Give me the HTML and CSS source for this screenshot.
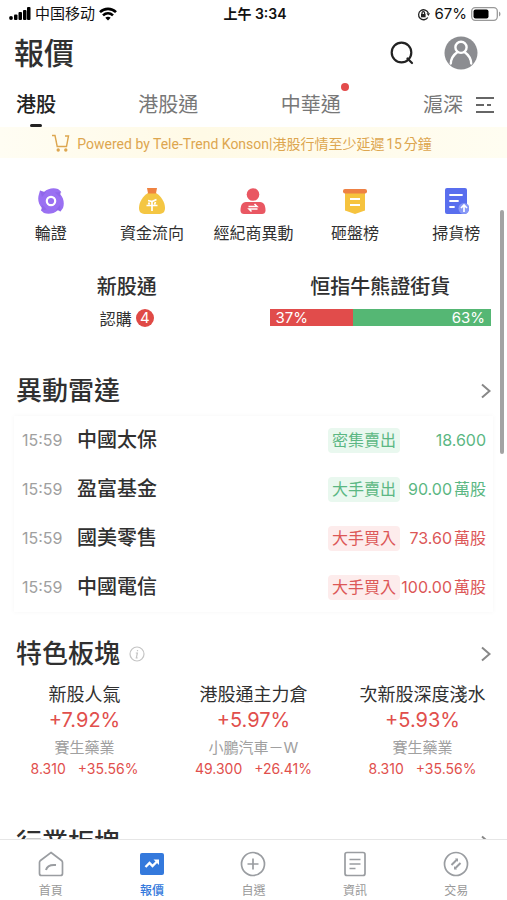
FILE: index.html
```
<!DOCTYPE html>
<html lang="zh-Hant">
<head>
    <meta charset="UTF-8">
    <meta name="viewport" content="width=device-width, initial-scale=1.0">
    <title>報價</title>
    <link rel="stylesheet" href="styles.css">
</head>
<body>
    <div class="status">
        <div class="status-left">
            <svg width="22" height="14" viewBox="0 0 22 14">
                <circle cx="2" cy="11" r="1.9"/>
                <rect x="5" y="7.500" width="3.500" height="5.500" rx="1"/>
                <rect x="9.500" y="5" width="3.500" height="8" rx="1"/>
                <rect x="14" y="3" width="3.500" height="10" rx="1"/>
                <rect x="18" y="0" width="3.500" height="13" rx="1"/>
            </svg>
            <span class="carrier" lang="zh-Hans">中国移动</span>
            <svg width="18" height="14" viewBox="0 0 18 14" fill="none" stroke="#000" stroke-width="2.600">
                <path d="M1 5.200C5.500 .700 12.500 .700 17 5.200"/>
                <path d="M4 8.400C7 5.600 11 5.600 14 8.400"/>
                <path d="M9 13.500L6.300 10.800C7.800 9.400 10.200 9.400 11.700 10.800Z" fill="#000" stroke="none"/>
            </svg>
        </div>
        <div class="clock">上午 3:34</div>
        <div class="status-right">
            <svg width="13" height="13" viewBox="0 0 13 13" fill="none" stroke="#222" stroke-width="1.300">
                <path d="M10.800 9.500A5 5 0 1 1 11.300 5"/>
                <path d="M9.500 5.200H13L11.400 8Z" fill="#222" stroke="none"/>
                <rect x="4" y="6" width="4.600" height="3.300" fill="#222" stroke="none"/>
                <path d="M5 6V5A1.300 1.300 0 0 1 7.600 5V6"/>
            </svg>
            <span>67%</span>
            <svg width="30" height="14" viewBox="0 0 30 14">
                <rect x=".700" y=".700" width="25.600" height="12.600" rx="3.500" fill="none" stroke="#999" stroke-width="1.300"/>
                <rect x="2.500" y="2.500" width="15" height="9" rx="2"/>
                <path d="M28 4.500C30 5.500 30 8.500 28 9.500Z" fill="#999"/>
            </svg>
        </div>
    </div>

    <header class="header">
        <h1>報價</h1>
        <div class="header-actions">
            <button type="button" aria-label="搜尋">
                <svg width="24" height="24" viewBox="0 0 24 24" fill="none" stroke="#222" stroke-width="2.200">
                    <circle cx="11.500" cy="11.500" r="9.800"/>
                    <path d="M17.500 17.500L22 22" stroke-linecap="round"/>
                </svg>
            </button>
            <button type="button" aria-label="帳戶">
                <svg width="34" height="34" viewBox="0 0 34 34" fill="none" stroke="#fff" stroke-width="2.400">
                    <circle cx="17" cy="17" r="16.500" fill="#8c8d91" stroke="none"/>
                    <circle cx="17" cy="11.300" r="5.600"/>
                    <path d="M6.800 27.500C7 21.500 10 18.500 13.500 16M20.500 16C24 18.500 27 21.500 27.200 27.500" stroke-linecap="round"/>
                </svg>
            </button>
        </div>
    </header>

    <nav class="markets">
        <div class="market-list">
            <a href="#" class="active">港股</a>
            <a href="#">港股通</a>
            <a href="#" class="has-dot">中華通</a>
            <a href="#">滬深</a>
        </div>
        <button type="button" aria-label="全部市場">
            <svg width="18" height="18" viewBox="0 0 18 18" fill="none" stroke="#666" stroke-width="1.800">
                <path d="M0 2H18M0 9H8M11 9H15M0 16H18"/>
            </svg>
        </button>
    </nav>

    <div class="notice">
        <svg width="18" height="18" viewBox="0 0 18 18" fill="none" stroke="#dda64f" stroke-width="1.400">
            <path d="M0 1.500H3L5.200 12.500H14.500L16.500 2H13M4.200 7.500H5"/>
            <circle cx="6.200" cy="16" r="1" fill="#dda64f"/>
            <circle cx="13.800" cy="16" r="1" fill="#dda64f"/>
        </svg>
        <span>Powered by Tele-Trend Konson|港股行情至少延遲15分鐘</span>
    </div>

    <main class="content">
        <nav class="shortcuts">
            <a href="#">
                <svg width="26" height="26" viewBox="0 0 26 26">
                    <path d="M1 6L2 2.500L6 4C10 0 16 -.500 20 1L23 3.500L22 6C26 10 26.500 16 25 20L22.500 23.500L20 22C16 26 10 26.500 6 25L3 22.500L4 20C0 16 -.500 10 1 6Z" fill="#9a70f2"/>
                    <path d="M2 2.500L8 4L4 9ZM23.500 4L21.500 9L17 4.500ZM22.500 23.500L18 22L22 17ZM3 22.500L4 17L9 21.500Z" fill="#7950d6" opacity=".3"/>
                    <circle cx="13" cy="13" r="4.200" fill="none" stroke="#fff" stroke-width="2.200"/>
                </svg>
                輪證
            </a>
            <a href="#">
                <svg width="26" height="26" viewBox="0 0 26 26">
                    <path d="M9 5H17C22 8 26 14 26 20C26 24.500 23.500 26 19 26H7C2.500 26 0 24.500 0 20C0 14 4 8 9 5Z" fill="#f4c643"/>
                    <path d="M8 0H18L17 5.500H9Z" fill="#ef8240"/>
                    <path d="M9 12.500L13 13.500L17.500 11.500M7.500 17.500H18.500M13 13V23M9.500 14.500L10.500 16.500M16.500 14L15.500 16.500" fill="none" stroke="#fff" stroke-width="1.700"/>
                </svg>
                資金流向
            </a>
            <a href="#">
                <svg width="26" height="26" viewBox="0 0 26 26">
                    <circle cx="13" cy="6.500" r="6.300" fill="#e95762"/>
                    <path d="M6 14H20C24 14 25.500 18 25.500 22.500C25.500 25 24 26 22 26H4C2 26 .500 25 .500 22.500C.500 18 2 14 6 14Z" fill="#e95762"/>
                    <path d="M8.500 18.500H17L14.500 16M17.500 21H9L11.500 23.500" fill="none" stroke="#fff" stroke-width="1.500"/>
                </svg>
                經紀商異動
            </a>
            <a href="#">
                <svg width="26" height="26" viewBox="0 0 26 26">
                    <path d="M3 4H23V22.500L13 26L3 22.500Z" fill="#f6c33e"/>
                    <rect x="1" y="1" width="24" height="4.500" rx="2" fill="#ee8144"/>
                    <path d="M8 11H18M8 17H18" stroke="#fff" stroke-width="2"/>
                </svg>
                砸盤榜
            </a>
            <a href="#">
                <svg width="26" height="26" viewBox="0 0 26 26">
                    <rect x="2" y="0" width="22" height="26" rx="2" fill="#596eee"/>
                    <path d="M7 7H19M7 13H15M7 19H11" stroke="#fff" stroke-width="1.800" stroke-linecap="round"/>
                    <circle cx="21" cy="20.500" r="5.500" fill="#8798f6"/>
                    <path d="M21 24V17.500M18 20L21 17L24 20" fill="none" stroke="#fff" stroke-width="1.700"/>
                </svg>
                掃貨榜
            </a>
        </nav>

        <div class="summary">
            <section>
                <h3>新股通</h3>
                <div class="subscribe">認購 <span class="count">4</span></div>
            </section>
            <section class="bull-bear">
                <h3>恒指牛熊證街貨</h3>
                <div class="ratio">
                    <div class="bull" style="width: 37.5%">37%</div>
                    <div class="bear">63%</div>
                </div>
            </section>
        </div>

        <a href="#" class="section-head">
            <h2>異動雷達</h2>
            <svg class="arrow" width="12" height="18" viewBox="0 0 12 18"><path d="M2 2.500L9.500 9L2 15.500"/></svg>
        </a>
        <div class="radar">
            <div class="radar-row down">
                <span class="time">15:59</span>
                <span class="name">中國太保</span>
                <span class="tag">密集賣出</span>
                <span class="value">18.600</span>
            </div>
            <div class="radar-row down">
                <span class="time">15:59</span>
                <span class="name">盈富基金</span>
                <span class="tag">大手賣出</span>
                <span class="value">90.00萬股</span>
            </div>
            <div class="radar-row up">
                <span class="time">15:59</span>
                <span class="name">國美零售</span>
                <span class="tag">大手買入</span>
                <span class="value">73.60萬股</span>
            </div>
            <div class="radar-row up">
                <span class="time">15:59</span>
                <span class="name">中國電信</span>
                <span class="tag">大手買入</span>
                <span class="value">100.00萬股</span>
            </div>
        </div>

        <a href="#" class="section-head featured">
            <h2>特色板塊</h2>
            <svg class="info" width="16" height="16" viewBox="0 0 16 16" fill="none" stroke="#c4c4c4" stroke-width="1.200">
                <circle cx="8" cy="8" r="7"/>
                <path d="M6.800 7H8.400L7.300 11.800H8.600M8.500 4V5.300"/>
            </svg>
            <svg class="arrow" width="12" height="18" viewBox="0 0 12 18"><path d="M2 2.500L9.500 9L2 15.500"/></svg>
        </a>
        <div class="sectors">
            <div class="sector">
                <div class="sector-name">新股人氣</div>
                <div class="sector-change">+7.92%</div>
                <div class="stock">賽生藥業</div>
                <div class="quote"><span>8.310</span><span>+35.56%</span></div>
            </div>
            <div class="sector">
                <div class="sector-name">港股通主力倉</div>
                <div class="sector-change">+5.97%</div>
                <div class="stock">小鵬汽車－W</div>
                <div class="quote"><span>49.300</span><span>+26.41%</span></div>
            </div>
            <div class="sector">
                <div class="sector-name">次新股深度淺水</div>
                <div class="sector-change">+5.93%</div>
                <div class="stock">賽生藥業</div>
                <div class="quote"><span>8.310</span><span>+35.56%</span></div>
            </div>
        </div>

        <a href="#" class="section-head industry">
            <h2>行業板塊</h2>
            <svg class="arrow" width="12" height="18" viewBox="0 0 12 18"><path d="M2 2.500L9.500 9L2 15.500"/></svg>
        </a>
    </main>

    <nav class="tabbar">
        <a href="#">
            <svg width="26" height="26" viewBox="0 0 26 26" fill="none" stroke="#9a9da1" stroke-width="1.700">
                <path d="M13 1.500L23.500 9.500Q24.500 10.300 24.500 11.500V22.500Q24.500 24.500 22.500 24.500H3.500Q1.500 24.500 1.500 22.500V11.500Q1.500 10.300 2.500 9.500Z"/>
                <path d="M8 19C9 15 13 13.500 18 14" stroke-width="2"/>
            </svg>
            首頁
        </a>
        <a href="#" class="active">
            <svg width="26" height="26" viewBox="0 0 26 26">
                <rect x="1" y="2" width="24" height="22" rx="2" fill="#3479dc"/>
                <path d="M6.500 16L10.500 12L13.500 15L18 10.500" fill="none" stroke="#fff" stroke-width="2.400"/>
                <path d="M14.500 8.500H20V14Z" fill="#fff"/>
            </svg>
            報價
        </a>
        <a href="#">
            <svg width="26" height="26" viewBox="0 0 26 26" fill="none" stroke="#9a9da1" stroke-width="1.700">
                <circle cx="13" cy="13" r="11.500"/>
                <path d="M13 7.500V18.500M7.500 13H18.500"/>
            </svg>
            自選
        </a>
        <a href="#">
            <svg width="26" height="26" viewBox="0 0 26 26" fill="none" stroke="#9a9da1" stroke-width="1.700">
                <rect x="3" y="1.500" width="20" height="23" rx="2"/>
                <path d="M7.500 8.500H18.500M7.500 13H18.500M7.500 17.500H13.500"/>
            </svg>
            資訊
        </a>
        <a href="#">
            <svg width="26" height="26" viewBox="0 0 26 26" fill="none" stroke="#9a9da1" stroke-width="1.700">
                <circle cx="13" cy="13" r="11.500"/>
                <path d="M8.500 14L14 8.500M12 17.500L17.500 12" stroke-width="2"/>
                <path d="M12 7.500H15V11ZM14 18.500H11V15Z" fill="#9a9da1" stroke="none"/>
            </svg>
            交易
        </a>
    </nav>
</body>
</html>
```

FILE: styles.css
```
* {
    box-sizing: border-box;
}
body {
    margin: 0;
    height: 100vh;
    display: flex;
    flex-direction: column;
    background: #fff;
    color: #303030;
    font-family: Inter, "Noto Sans CJK TC", sans-serif;
    font-size: 16px;
    text-autospace: normal;
}
h1, h2, h3 {
    margin: 0;
    font-weight: 500;
}
a {
    color: inherit;
    text-decoration: none;
}
button {
    display: flex;
    padding: 0;
    border: 0;
    background: none;
}
svg {
    display: block;
    flex: none;
}

/* status bar */
.status {
    display: grid;
    grid-template-columns: 1fr auto 1fr;
    align-items: center;
    height: 28px;
    padding: 0 6px 0 9px;
    color: #111;
    font-size: 15px;
    line-height: 20px;
}
.status-left, .status-right {
    display: flex;
    align-items: center;
    gap: 4px;
}
.carrier {
    font-family: Inter, "Noto Sans CJK SC", sans-serif;
}
.clock {
    font-size: 14px;
    font-weight: 600;
}
.status-right {
    justify-content: flex-end;
}

/* title and markets */
.header {
    display: flex;
    align-items: center;
    justify-content: space-between;
    height: 50px;
    padding: 0 29px 0 14px;
}
.header h1 {
    font-size: 30px;
    line-height: 40px;
}
.header-actions {
    display: flex;
    align-items: center;
    gap: 30px;
}
.markets {
    display: flex;
    align-items: center;
    gap: 13px;
    height: 49px;
    padding: 5px 13px 0 16px;
}
.market-list {
    flex: 1;
    display: flex;
    justify-content: space-between;
    color: #777;
    font-size: 20px;
    line-height: 44px;
}
.market-list a {
    position: relative;
}
.market-list .active {
    color: #222;
    font-weight: 500;
}
.market-list .active::after {
    content: "";
    position: absolute;
    left: 50%;
    bottom: 0;
    width: 12px;
    height: 3px;
    margin-left: -6px;
    border-radius: 2px;
    background: #222;
}
.has-dot::after {
    content: "";
    position: absolute;
    top: 0;
    right: -8px;
    width: 8px;
    height: 8px;
    border-radius: 50%;
    background: #e34b4b;
}
.notice {
    display: flex;
    align-items: center;
    justify-content: center;
    gap: 7px;
    height: 31px;
    padding-right: 23px;
    background: linear-gradient(to right, #fffdf3, #fffae6 40%, #fffdf1);
    color: #dda64f;
    font-family: Roboto, "Noto Sans CJK TC", sans-serif;
    font-size: 14px;
}

.content {
    position: relative;
    flex: 1;
    min-height: 0;
    overflow: hidden;
}
/* scroll thumb */
.content::after {
    content: "";
    position: absolute;
    top: 52px;
    right: 3px;
    width: 4px;
    height: 244px;
    border-radius: 2px;
    background: #a3a3a3;
}
.shortcuts {
    display: grid;
    grid-template-columns: repeat(5, 1fr);
    padding-top: 30px;
}
.shortcuts a {
    display: flex;
    flex-direction: column;
    align-items: center;
    gap: 7px;
    line-height: 24px;
    white-space: nowrap;
}

.summary {
    display: grid;
    grid-template-columns: 1fr 1fr;
    padding-top: 28px;
    text-align: center;
}
.summary h3 {
    margin-bottom: 8px;
    font-size: 20px;
    line-height: 28px;
}
.subscribe {
    display: flex;
    align-items: center;
    justify-content: center;
    gap: 4px;
    height: 18px;
}
.count {
    width: 18px;
    height: 18px;
    border-radius: 50%;
    background: #e04a46;
    color: #fff;
    font-size: 15px;
    line-height: 18px;
}
.bull-bear {
    padding: 0 16px;
}
.ratio {
    display: flex;
    height: 17px;
    color: #fff;
    font-size: 15px;
    line-height: 17px;
}
.bull {
    padding-left: 6px;
    background: #e14c4b;
    text-align: left;
}
.bear {
    flex: 1;
    padding-right: 6px;
    background: #55b774;
    text-align: right;
}

.section-head {
    display: flex;
    align-items: center;
    height: 40px;
    margin-top: 44px;
    padding: 0 15px 0 16px;
}
.section-head h2 {
    font-size: 26px;
    line-height: 40px;
}
.section-head.featured {
    margin-top: 22px;
}
.section-head.industry {
    margin-top: 44px;
}
.info {
    margin-left: 9px;
}
.arrow {
    margin-left: auto;
    fill: none;
    stroke: #888;
    stroke-width: 2;
}

.radar {
    margin: 5px 14px 0;
    box-shadow: 0 0 5px rgba(0, 0, 0, 0.04);
}
.radar-row {
    display: flex;
    align-items: center;
    height: 49px;
    padding: 0 7px 0 8px;
    line-height: 25px;
}
.time {
    width: 55px;
    color: #a0a0a0;
}
.name {
    flex: 1;
    font-size: 20px;
    font-weight: 500;
}
.tag {
    padding: 0 4px;
    border-radius: 4px;
}
.value {
    width: 86px;
    text-align: right;
    white-space: nowrap;
}
.down .tag, .down .value {
    color: #5bb783;
}
.down .tag {
    background: #e9f8ef;
}
.up .tag, .up .value {
    color: #dc5757;
}
.up .tag {
    background: #fdecec;
}

.sectors {
    display: grid;
    grid-template-columns: repeat(3, 1fr);
    padding-top: 8px;
    text-align: center;
}
.sector-name {
    font-size: 18px;
    line-height: 26px;
}
.sector-change {
    color: #e14f4c;
    font-size: 20px;
    line-height: 24px;
}
.stock {
    margin-top: 5px;
    color: #a0a0a0;
    font-size: 15px;
    line-height: 22px;
}
.quote {
    display: flex;
    justify-content: center;
    gap: 12px;
    color: #e14f4c;
    font-size: 14px;
    line-height: 20px;
}

.tabbar {
    display: grid;
    grid-template-columns: repeat(5, 1fr);
    height: 61px;
    padding-top: 11px;
    border-top: 1px solid #e6e6e6;
    background: #fff;
    color: #999;
    font-size: 12px;
}
.tabbar a {
    display: flex;
    flex-direction: column;
    align-items: center;
    gap: 5px;
    line-height: 18px;
}
.tabbar .active {
    color: #3479dc;
    font-weight: 500;
}
```
